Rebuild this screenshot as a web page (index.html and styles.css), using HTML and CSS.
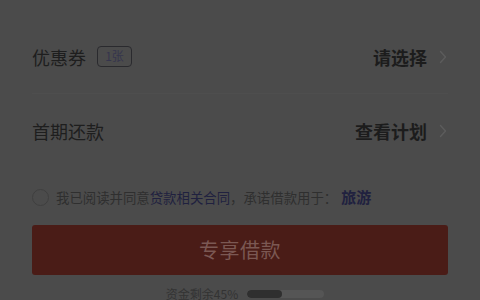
FILE: index.html
```html
<!DOCTYPE html>
<html lang="zh">
<head>
<meta charset="utf-8">
<link rel="stylesheet" href="styles.css">
</head>
<body>
<div class="page">
  <div class="row row-first">
    <div class="left">
      <span class="label">优惠券</span>
      <span class="badge">1张</span>
    </div>
    <div class="right">
      <span class="value">请选择</span>
      <svg class="chev" width="8" height="14" viewBox="0 0 8 14"><path d="M1.5 1.5 L6.5 7 L1.5 12.5" fill="none" stroke="#5c5c5c" stroke-width="1.4" stroke-linecap="round" stroke-linejoin="round"/></svg>
    </div>
  </div>
  <div class="row">
    <div class="left">
      <span class="label">首期还款</span>
    </div>
    <div class="right">
      <span class="value">查看计划</span>
      <svg class="chev" width="8" height="14" viewBox="0 0 8 14"><path d="M1.5 1.5 L6.5 7 L1.5 12.5" fill="none" stroke="#5c5c5c" stroke-width="1.4" stroke-linecap="round" stroke-linejoin="round"/></svg>
    </div>
  </div>
  <div class="agree">
    <span class="circle"></span>
    <span class="agree-text">我已阅读并同意<span class="link">贷款相关合同</span>，承诺借款用于：<span class="purpose">旅游</span></span>
  </div>
  <div class="btn">专享借款</div>
  <div class="footer">
    <span class="remain">资金剩余45%</span>
    <span class="bar"><span class="fill" style="width:45%"></span></span>
  </div>
</div>
</body>
</html>
```
FILE: styles.css
```css
html, body {
  margin: 0;
  padding: 0;
  background: #4b4b4b;
  overflow: hidden;
}
body {
  width: 480px;
  height: 300px;
  font-family: "Noto Sans CJK SC", "Noto Sans", sans-serif;
  color: #1f1f1f;
}
.page {
  padding: 20px 32px 0 32px;
  display: flex;
  flex-direction: column;
}
.row {
  height: 74px;
  display: flex;
  align-items: center;
  justify-content: space-between;
}
.row-first {
  border-bottom: 1px solid #4e4e4e;
  height: 73px;
}
.left {
  display: flex;
  align-items: center;
  gap: 11px;
}
.label {
  font-size: 18px;
  line-height: 24px;
  color: #1e1e1e;
}
.badge {
  box-sizing: border-box;
  width: 35px;
  height: 21px;
  border: 1.5px solid #2a2a2e;
  border-radius: 4px;
  font-size: 12px;
  line-height: 18px;
  color: #35354d;
  text-align: center;
}
.right {
  display: flex;
  align-items: center;
  gap: 12px;
  margin-right: 1px;
}
.value {
  font-size: 18px;
  line-height: 24px;
  font-weight: 700;
  color: #1c1c1c;
}
.chev {
  display: block;
}
.agree {
  margin-top: 19px;
  height: 20px;
  display: flex;
  align-items: center;
  gap: 7px;
}
.circle {
  box-sizing: border-box;
  width: 17px;
  height: 17px;
  border: 1.5px solid #3f3f3f;
  border-radius: 50%;
  flex: none;
}
.agree-text {
  font-size: 13.4px;
  line-height: 20px;
  color: #2f2f2f;
  white-space: nowrap;
}
.link {
  color: #20213f;
}
.purpose {
  color: #20213f;
  font-size: 15px;
  font-weight: 700;
  margin-left: 4px;
}
.btn {
  margin-top: 18px;
  height: 50px;
  border-radius: 3px;
  background: #4a1c17;
  color: #7b5853;
  font-size: 20px;
  line-height: 50px;
  text-align: center;
  letter-spacing: 0.5px;
}
.footer {
  margin-top: 9px;
  height: 20px;
  display: flex;
  align-items: center;
  justify-content: center;
  gap: 9px;
  padding-left: 10px;
}
.remain {
  font-size: 12px;
  line-height: 20px;
  color: #333333;
}
.bar {
  width: 77px;
  height: 8px;
  border-radius: 4px;
  background: #555555;
  overflow: hidden;
  display: block;
}
.fill {
  display: block;
  height: 100%;
  background: #2f2f2f;
  border-radius: 4px;
}
```
